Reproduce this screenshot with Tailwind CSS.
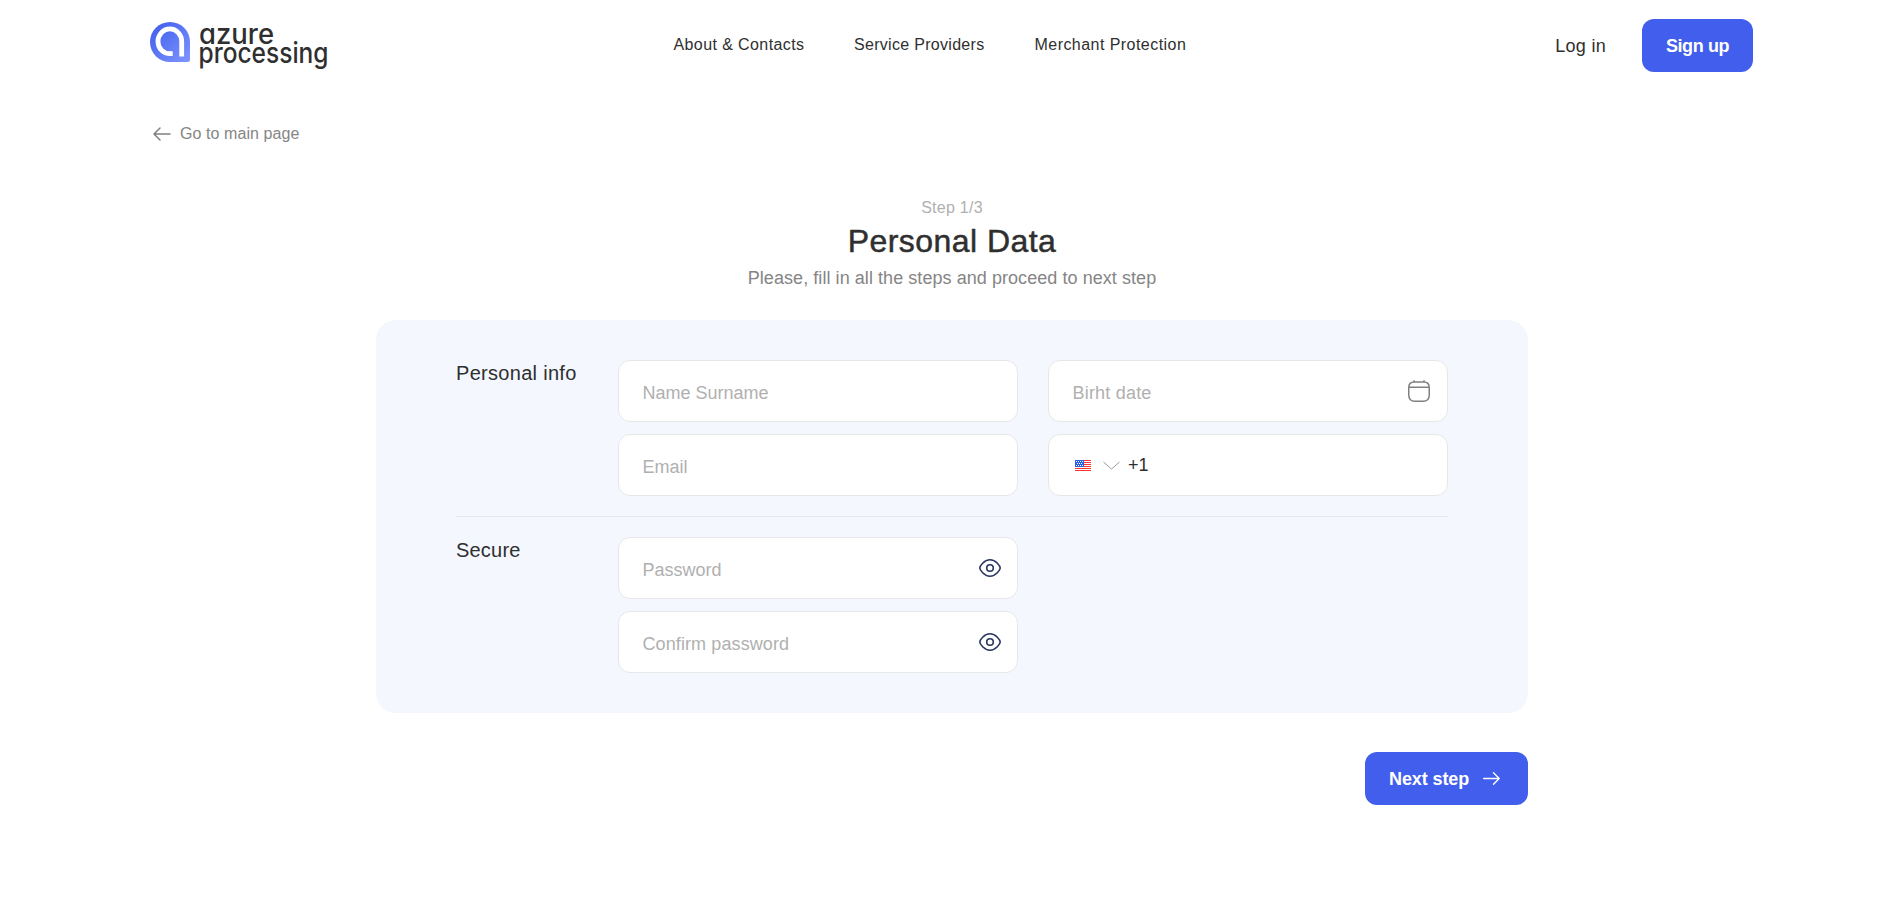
<!DOCTYPE html>
<html lang="en">
<head>
<meta charset="utf-8">
<title>Azure Processing</title>
<script src="https://cdn.jsdelivr.net/npm/@tailwindcss/browser@4"></script>
</head>
<body class="bg-white font-['Liberation_Sans',Arial,sans-serif] text-[#2f2f2f] h-screen overflow-hidden">
<header class="flex items-start pl-[150px] w-[1753px] h-[92px] pt-[19px]">
  <svg class="shrink-0 overflow-visible" width="190" height="56" viewBox="0 0 190 56">
    <defs><linearGradient id="lg" x1="0" y1="0" x2="1" y2="1"><stop offset="0" stop-color="#3c5bea"/><stop offset="1" stop-color="#7f95ff"/></linearGradient></defs>
    <path d="M20 3A20 20 0 0 0 20 43H37.500Q40 43 40 40.500V23A20 20 0 0 0 20 3Z" fill="url(#lg)"/>
    <path d="M22.700 34.700H20A12 12 0 0 1 8 22.500A10.850 11.500 0 0 1 31.700 22.500V37.500" fill="none" stroke="#fff" stroke-width="4.800"/>
    <g font-family="Inter,sans-serif" font-size="28" font-weight="500" fill="#2f2f2f" style="font-feature-settings:'cv11'">
      <text x="49" y="24.500" textLength="75" lengthAdjust="spacingAndGlyphs">azure</text>
      <text x="48.500" y="43.500" textLength="130" lengthAdjust="spacingAndGlyphs">processing</text>
    </g>
  </svg>
  <nav class="flex shrink-0 pl-[333.500px] pt-[16px] text-base leading-[20px] tracking-[0.4px] whitespace-nowrap">
    <a class="w-[180.500px] shrink-0">About &amp; Contacts</a><a class="w-[180.500px] shrink-0 tracking-[0.3px]">Service Providers</a><a class="tracking-[0.45px]">Merchant Protection</a>
  </nav>
  <div class="ml-auto flex shrink-0 items-center text-lg whitespace-nowrap">
    <a class="mr-[36px] tracking-[0.3px]">Log in</a>
    <button class="w-[111px] h-[53px] rounded-xl bg-[#425eec] text-white font-bold tracking-[-0.4px]">Sign up</button>
  </div>
</header>
<a class="flex items-center gap-[9px] ml-[153px] mt-[31px] h-[22px] text-base tracking-[0.08px] text-[#858585]">
  <svg width="18" height="14" viewBox="0 0 18 14" fill="none" stroke="#808080" stroke-width="1.500" stroke-linecap="round" stroke-linejoin="round"><path d="M17 7H1M7 1L1 7L7 13"/></svg>Go to main page
</a>
<main class="ml-[376px] w-[1152px] pt-[51px]">
  <div class="text-center">
    <p class="text-base leading-[24px] tracking-[0.25px] text-[#b0b0b0]">Step 1/3</p>
    <h1 class="pt-px text-[32px] leading-[40px] tracking-[0.45px] [-webkit-text-stroke:0.5px_#2f2f2f]">Personal Data</h1>
    <p class="text-lg leading-[34px] tracking-[0.06px] text-[#858585]">Please, fill in all the steps and proceed to next step</p>
  </div>
  <section class="mt-[25px] h-[393px] rounded-[20px] bg-[#f4f7fe] px-20 py-10 text-lg">
    <div class="flex">
      <h2 class="w-[162px] -mt-px text-xl leading-[28px] tracking-[0.3px]">Personal info</h2>
      <div class="grid grid-cols-[400px_400px] gap-x-[30px] gap-y-3">
        <div class="flex items-center h-[62px] rounded-xl border border-[#e7e7ea] bg-white pl-[23.500px] pr-4 pt-1 text-[#b0b0b0]">Name Surname</div>
        <div class="flex items-center justify-between h-[62px] rounded-xl border border-[#e7e7ea] bg-white pl-[23.500px] pr-4 text-[#b0b0b0]"><span class="pt-1 tracking-[0.2px]">Birht date</span>
          <svg width="24" height="24" viewBox="0 0 24 24" fill="none" stroke="#808080" stroke-width="1.500"><path d="M1.750 8.500Q1.750 3 7.250 3H16.750Q22.250 3 22.250 8.500V16Q22.250 22.250 16 22.250H8Q1.750 22.250 1.750 16ZM2 8.300H22M7 1.200V3M17 1.200V3"/></svg></div>
        <div class="flex items-center h-[62px] rounded-xl border border-[#e7e7ea] bg-white pl-[23.500px] pr-4 pt-1 text-[#b0b0b0]">Email</div>
        <div class="flex items-center h-[62px] rounded-xl border border-[#e7e7ea] bg-white pl-[26px]">
          <svg width="16" height="11" viewBox="0 0 16 11"><path fill="#fff" d="M0 0H16V11H0Z"/><path stroke="#f33" d="M0 .5H16M0 2.500H16M0 4.500H16M0 6.500H16M0 8.500H16M0 10.500H16"/><path fill="#2a5fe0" d="M0 0H9V7H0Z"/><path stroke="#fff" stroke-dasharray="1 1" d="M1 1.500H8M2 3.500H8M1 5.500H8"/></svg>
          <svg class="ml-[12px] mr-[8px]" width="17" height="9" viewBox="0 0 17 9" fill="none" stroke="#9a9a9a"><path d="M.5 1L8.500 8L16.500 1"/></svg><span>+1</span>
        </div>
      </div>
    </div>
    <hr class="my-5 border-t border-[#e7e7ea]">
    <div class="flex">
      <h2 class="w-[162px] -mt-px text-xl leading-[28px] tracking-[0.2px]">Secure</h2>
      <div class="grid grid-cols-[400px] gap-y-3">
        <div class="flex items-center justify-between h-[62px] rounded-xl border border-[#e7e7ea] bg-white pl-[23.500px] pr-4 text-[#b0b0b0]"><span class="pt-1">Password</span>
          <svg width="22" height="18" viewBox="0 0 22 18" fill="none" stroke="#27355f" stroke-width="1.600"><path d="M.8 9C.8 7.200 5 .8 11 .8S21.200 7.200 21.200 9S17 17.200 11 17.200S.8 10.800 .8 9Z"/><circle cx="11" cy="9" r="3.300"/></svg></div>
        <div class="flex items-center justify-between h-[62px] rounded-xl border border-[#e7e7ea] bg-white pl-[23.500px] pr-4 text-[#b0b0b0]"><span class="pt-1 tracking-[0.1px]">Confirm password</span>
          <svg width="22" height="18" viewBox="0 0 22 18" fill="none" stroke="#27355f" stroke-width="1.600"><path d="M.8 9C.8 7.200 5 .8 11 .8S21.200 7.200 21.200 9S17 17.200 11 17.200S.8 10.800 .8 9Z"/><circle cx="11" cy="9" r="3.300"/></svg></div>
      </div>
    </div>
  </section>
  <button class="ml-auto mt-[39px] flex items-center w-[163px] h-[53px] rounded-xl bg-[#425eec] pl-6 text-lg font-bold text-white tracking-[-0.1px] whitespace-nowrap">Next step
    <svg class="ml-[14px]" width="17" height="13" viewBox="0 0 17 13" fill="none" stroke="#fff" stroke-width="1.400" stroke-linecap="round" stroke-linejoin="round"><path d="M.7 6.500H16M10.500 .8L16.200 6.500L10.500 12.200"/></svg>
  </button>
</main>
</body>
</html>
